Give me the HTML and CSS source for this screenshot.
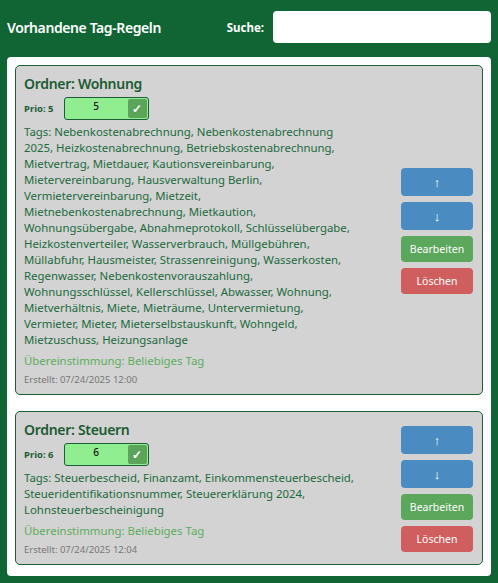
FILE: index.html
```html
<!DOCTYPE html>
<html lang="de">
<head>
	<meta charset="UTF-8">
	<title>Tag-Regeln</title>
	<link rel="stylesheet" href="styles.css">
</head>
<body>
	<div class="head">
		<h2>Vorhandene Tag-Regeln</h2>
		<label class="search">Suche: <input type="text"></label>
	</div>
	<div class="list">
		<div class="rule">
			<div class="info">
				<h3>Ordner: Wohnung</h3>
				<div class="prio">
					<b>Prio: 5</b>
					<div class="prio-box"><span>5</span><i>✓</i></div>
				</div>
				<p class="tags">Tags: Nebenkostenabrechnung, Nebenkostenabrechnung 2025, Heizkostenabrechnung, Betriebskostenabrechnung, Mietvertrag, Mietdauer, Kautionsvereinbarung, Mietervereinbarung, Hausverwaltung Berlin, Vermietervereinbarung, Mietzeit, Mietnebenkostenabrechnung, Mietkaution, Wohnungsübergabe, Abnahmeprotokoll, Schlüsselübergabe, Heizkostenverteiler, Wasserverbrauch, Müllgebühren, Müllabfuhr, Hausmeister, Strassenreinigung, Wasserkosten, Regenwasser, Nebenkostenvorauszahlung, Wohnungsschlüssel, Kellerschlüssel, Abwasser, Wohnung, Mietverhältnis, Miete, Mieträume, Untervermietung, Vermieter, Mieter, Mieterselbstauskunft, Wohngeld, Mietzuschuss, Heizungsanlage</p>
				<p class="match">Übereinstimmung: Beliebiges Tag</p>
				<p class="date">Erstellt: 07/24/2025 12:00</p>
			</div>
			<div class="actions">
				<button class="up">↑</button>
				<button class="down">↓</button>
				<button class="edit">Bearbeiten</button>
				<button class="del">Löschen</button>
			</div>
		</div>
		<div class="rule">
			<div class="info">
				<h3>Ordner: Steuern</h3>
				<div class="prio">
					<b>Prio: 6</b>
					<div class="prio-box"><span>6</span><i>✓</i></div>
				</div>
				<p class="tags">Tags: Steuerbescheid, Finanzamt, Einkommensteuerbescheid, Steueridentifikationsnummer, Steuererklärung 2024, Lohnsteuerbescheinigung</p>
				<p class="match">Übereinstimmung: Beliebiges Tag</p>
				<p class="date">Erstellt: 07/24/2025 12:04</p>
			</div>
			<div class="actions">
				<button class="up">↑</button>
				<button class="down">↓</button>
				<button class="edit">Bearbeiten</button>
				<button class="del">Löschen</button>
			</div>
		</div>
	</div>
</body>
</html>
```

FILE: styles.css
```css
*{
	margin: 0px;
	padding: 0px;
	box-sizing: border-box;
}
body{
	background: #116535;
	padding: 0 7px;
	font-family: "Noto Sans", "Open Sans", sans-serif;
}
.head{
	display: flex;
	align-items: center;
	padding-top: 11px;
	margin-bottom: 14px;
}
.head h2{
	flex: 1;
	color: #fff;
	font-size: 14px;
	font-weight: 600;
	letter-spacing: -0.4px;
}
.search{
	display: flex;
	align-items: center;
	gap: 9px;
	color: #fff;
	font-size: 11.5px;
	font-weight: 700;
}
.search input{
	width: 218px;
	height: 32px;
	border: none;
	border-radius: 4px;
	background: #fff;
}
.list{
	background: #fff;
	border-radius: 4px;
	padding: 8px 8px 11px 8px;
	display: flex;
	flex-direction: column;
	gap: 16px;
}
.rule{
	display: flex;
	align-items: center;
	gap: 45px;
	background: #d3d3d3;
	border: 1px solid #1d5e37;
	border-radius: 5px;
	padding: 8px 9px 7px 8px;
}
.info{
	flex: 1;
}
.info h3{
	color: #1b5b33;
	font-size: 14px;
	font-weight: 600;
	line-height: 20px;
	letter-spacing: -0.3px;
}
.prio{
	display: flex;
	align-items: center;
	margin-top: 3px;
	height: 23px;
	gap: 10px;
}
.prio b{
	color: #1b5b33;
	font-size: 9.5px;
	font-weight: 700;
	white-space: nowrap;
}
.prio-box{
	display: flex;
	width: 85px;
	height: 23px;
	background: #90ee90;
	border: 1px solid #1d5e37;
	border-radius: 3px;
	overflow: hidden;
}
.prio-box span{
	flex: 1;
	text-align: center;
	font-size: 10px;
	font-weight: 500;
	line-height: 17px;
	color: #111;
}
.prio-box i{
	width: 19px;
	margin: 1px 1px 1px 0;
	background: #5aa55a;
	border-radius: 2px;
	color: #fff;
	font-style: normal;
	font-weight: 700;
	font-size: 12px;
	line-height: 19px;
	text-align: center;
}
.tags{
	margin-top: 4px;
	color: #1a6a3b;
	font-size: 11.4px;
	line-height: 16px;
}
.match{
	margin-top: 5px;
	color: #5cad5c;
	font-size: 11.4px;
	line-height: 16px;
}
.date{
	margin-top: 4px;
	color: #777;
	font-size: 9.5px;
	line-height: 14px;
}
.actions{
	width: 72px;
	display: flex;
	flex-direction: column;
	gap: 6px;
}
.actions button{
	border: none;
	border-radius: 4px;
	color: #fff;
	font-family: inherit;
	font-size: 10.5px;
	height: 26px;
}
.actions .up, .actions .down{
	background: #4a8cc2;
	height: 28px;
	font-size: 13px;
}
.actions .edit{
	background: #5ba75b;
}
.actions .del{
	background: #d05e5e;
}
```
